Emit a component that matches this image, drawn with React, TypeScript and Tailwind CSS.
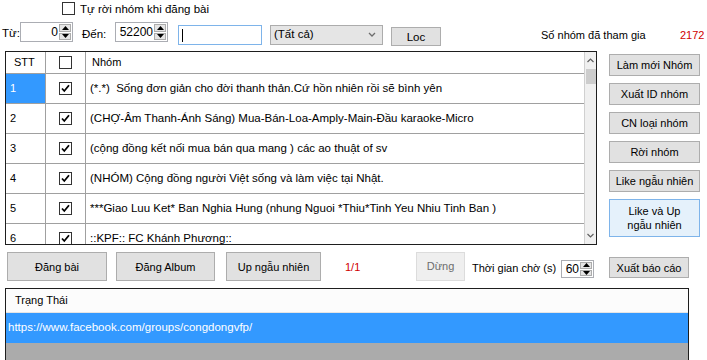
import React from "react";

function CheckBox({ checked }: { checked?: boolean }) {
  return (
    <span className="w-[13px] h-[13px] border border-[#333333] bg-white flex items-center justify-center shrink-0">
      {checked && (
        <svg width="11" height="11" viewBox="0 0 11 11">
          <path d="M2 5.5 L4.3 8 L9 2.3" fill="none" stroke="#000" strokeWidth="1.8" />
        </svg>
      )}
    </span>
  );
}

function SpinBtns() {
  return (
    <div className="w-[13px] flex flex-col gap-[1px] py-[1px] pr-[1px]">
      <div className="flex-1 bg-[#e5e5e5] border border-[#acacac] flex items-center justify-center">
        <svg width="7" height="4" viewBox="0 0 7 4"><path d="M0 4 L3.5 0 L7 4Z" fill="#000" /></svg>
      </div>
      <div className="flex-1 bg-[#e5e5e5] border border-[#acacac] flex items-center justify-center">
        <svg width="7" height="4" viewBox="0 0 7 4"><path d="M0 0 L3.5 4 L7 0Z" fill="#000" /></svg>
      </div>
    </div>
  );
}

function Spinner({ value, cls }: { value: string; cls: string }) {
  return (
    <div className={"flex border border-[#abadb3] bg-white shrink-0 " + cls}>
      <div className="flex-1 text-right pr-[1px] flex items-center justify-end text-[12px]">{value}</div>
      <SpinBtns />
    </div>
  );
}

function Btn({ children, cls }: { children: React.ReactNode; cls: string }) {
  return (
    <div className={"bg-[#e1e1e1] border border-[#adadad] flex items-center justify-center text-center shrink-0 leading-[14px] whitespace-nowrap " + cls}>
      {children}
    </div>
  );
}

const rows = [
  "(*.*)  Sống đơn giản cho đời thanh thản.Cứ hồn nhiên rồi sẽ bình yên",
  "(CHỢ-Âm Thanh-Ánh Sáng) Mua-Bán-Loa-Amply-Main-Đầu karaoke-Micro",
  "(cộng đồng kết nối mua bán qua mang ) các ao thuật of sv",
  "(NHÓM) Cộng đồng người Việt sống và làm việc tại Nhật.",
  "***Giao Luu Ket* Ban Nghia Hung (nhung Nguoi *Thiu*Tinh Yeu Nhiu Tinh Ban )",
  "::KPF:: FC Khánh Phương::",
];

export default function App() {
  return (
    <div className="w-[707px] h-[360px] overflow-hidden bg-white text-black text-[11px] font-['Liberation_Sans',Arial,sans-serif] flex flex-col whitespace-nowrap">
      {/* Row 1 */}
      <div className="h-[20px] flex items-start pt-[2px] pl-[62px] shrink-0">
        <CheckBox />
        <span className="ml-[5px] leading-[14px] text-[11.5px]">Tự rời nhóm khi đăng bài</span>
      </div>

      {/* Row 2 */}
      <div className="h-[31px] flex items-start shrink-0">
        <span className="ml-[2px] w-[18px] mt-[6px] leading-[14px] text-[11.5px]">Từ:</span>
        <Spinner value="0" cls="w-[53px] h-[20px] mt-[2px]" />
        <span className="ml-[9px] w-[33px] mt-[7px] leading-[14px] text-[11.5px]">Đến:</span>
        <Spinner value="52200" cls="w-[53px] h-[20px] mt-[2px]" />
        <div className="ml-[10px] w-[84px] h-[20px] mt-[5px] border border-[#7eb4ea] bg-white flex items-center pl-[3px] shrink-0">
          <span className="w-[1px] h-[13px] bg-black" />
        </div>
        <div className="ml-[8px] w-[113px] h-[20px] mt-[5px] border border-[#acacac] bg-[#e5e5e5] flex items-center pl-[3px] pr-[6px] justify-between shrink-0 text-[11.5px]">
          <span>(Tất cả)</span>
          <svg width="8" height="6" viewBox="0 0 8 6"><path d="M1 1 L4 4 L7 1" fill="none" stroke="#6d6d6d" strokeWidth="1.3" /></svg>
        </div>
        <Btn cls="ml-[8px] w-[50px] h-[19px] mt-[7px] text-[11.5px]">Loc</Btn>
        <span className="ml-[100px] w-[139px] mt-[8px] leading-[14px] shrink-0">Số nhóm đã tham gia</span>
        <span className="mt-[8px] leading-[14px] text-[#d00000]">2172</span>
      </div>

      {/* Middle */}
      <div className="h-[201px] flex shrink-0">
        <div className="ml-[5px] w-[592px] h-[194px] border border-[#1e1e1e] flex overflow-hidden">
          <div className="flex-1 flex flex-col">
            <div className="h-[22px] flex border-b border-[#a0a0a0] bg-white shrink-0">
              <div className="w-[40px] border-r border-[#a0a0a0] pl-[8px] flex items-center">STT</div>
              <div className="w-[40px] border-r border-[#a0a0a0] flex items-center justify-center"><CheckBox /></div>
              <div className="flex-1 pl-[6px] flex items-center">Nhóm</div>
            </div>
            {rows.map((r, i) => (
              <div key={i} className="h-[30px] flex border-b border-[#a0a0a0] bg-white shrink-0">
                <div className={"w-[40px] border-r border-[#a0a0a0] pl-[4px] flex items-center " + (i === 0 ? "bg-[#3399ff] text-white" : "")}>{i + 1}</div>
                <div className="w-[40px] border-r border-[#a0a0a0] flex items-center justify-center"><CheckBox checked /></div>
                <div className="flex-1 pl-[4px] flex items-center overflow-hidden text-[11.5px] whitespace-pre">{r}</div>
              </div>
            ))}
          </div>
          <div className="w-[12px] bg-[#f0f0f0] border-l border-[#d0d0d0] flex flex-col items-center shrink-0">
            <div className="h-[17px] flex items-center justify-center">
              <svg width="7" height="5" viewBox="0 0 7 5"><path d="M0.5 4 L3.5 1 L6.5 4" fill="none" stroke="#606060" strokeWidth="1.2" /></svg>
            </div>
            <div className="w-[10px] h-[15px] bg-[#cdcdcd]" />
            <div className="flex-1" />
            <div className="h-[17px] flex items-center justify-center">
              <svg width="7" height="5" viewBox="0 0 7 5"><path d="M0.5 1 L3.5 4 L6.5 1" fill="none" stroke="#606060" strokeWidth="1.2" /></svg>
            </div>
          </div>
        </div>
        <div className="ml-[12px] w-[91px] pt-[3px] flex flex-col gap-[7px]">
          <Btn cls="h-[22px]">Làm mới Nhóm</Btn>
          <Btn cls="h-[22px]">Xuất ID nhóm</Btn>
          <Btn cls="h-[22px]">CN loại nhóm</Btn>
          <Btn cls="h-[22px]">Rời nhóm</Btn>
          <Btn cls="h-[22px]">Like ngẫu nhiên</Btn>
          <Btn cls="h-[38px] !bg-[#e5f1fb] !border-[#7eb4ea]">Like và Up<br />ngẫu nhiên</Btn>
        </div>
      </div>

      {/* Bottom row */}
      <div className="h-[36px] flex items-start shrink-0">
        <Btn cls="ml-[7px] w-[100px] h-[29px]">Đăng bài</Btn>
        <Btn cls="ml-[9px] w-[99px] h-[29px]">Đăng Album</Btn>
        <Btn cls="ml-[11px] w-[95px] h-[29px]">Up ngẫu nhiên</Btn>
        <span className="ml-[24px] w-[71px] mt-[8px] leading-[14px] text-[#d00000] shrink-0">1/1</span>
        <div className="w-[49px] h-[29px] bg-[#efefef] border border-[#dcdcdc] text-[#6d6d6d] flex items-center justify-center shrink-0">Dừng</div>
        <span className="ml-[7px] w-[89px] mt-[9px] leading-[14px] shrink-0">Thời gian chờ (s)</span>
        <Spinner value="60" cls="w-[33px] h-[18px] mt-[8px]" />
        <Btn cls="ml-[15px] w-[80px] h-[21px] mt-[5px]">Xuất báo cáo</Btn>
      </div>

      {/* Status list */}
      <div className="ml-[5px] w-[684px] flex-1 border border-b-0 border-[#1e1e1e] flex flex-col bg-[#ababab]">
        <div className="h-[24px] bg-[#fcfcfc] border-b border-[#e5e5e5] pl-[9px] flex items-center shrink-0">Trạng Thái</div>
        <div className="h-[30px] bg-[#3399ff] text-white pl-[2px] flex items-center shrink-0 text-[11.5px]">https://www.facebook.com/groups/congdongvfp/</div>
      </div>
    </div>
  );
}
